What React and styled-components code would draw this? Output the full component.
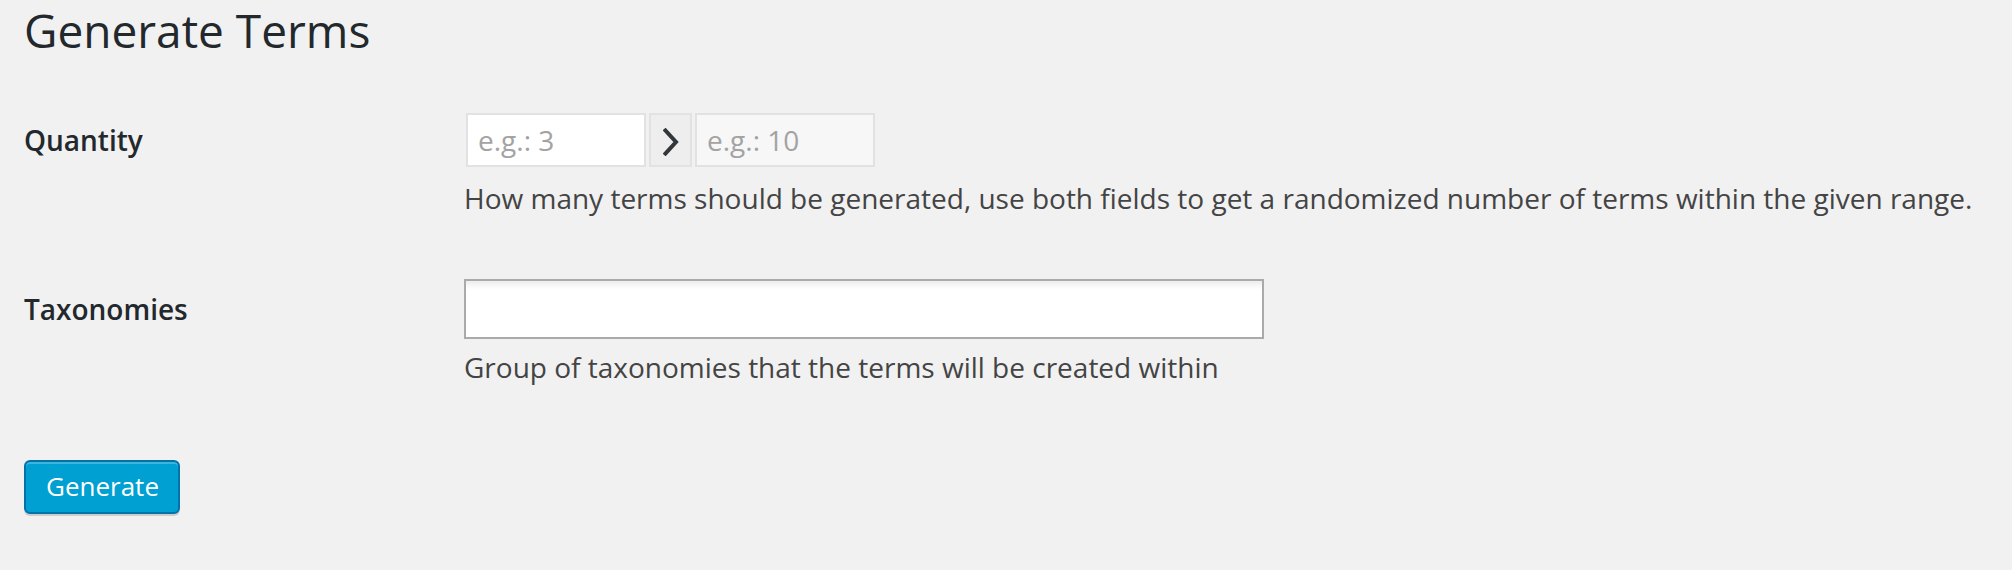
import React from "react";
import styled, { createGlobalStyle } from "styled-components";

const Global = createGlobalStyle`
  html, body { margin: 0; padding: 0; background: #f1f1f1; }
  body { font-family: "Open Sans", "Noto Sans", sans-serif; color: #23282d; }
  * { box-sizing: border-box; }
`;

const Page = styled.div`
  min-height: 570px;
  padding: 1px 0 0 24px;
  background: #f1f1f1;
`;

const Title = styled.h1`
  margin: 0;
  font-size: 46px;
  font-weight: 400;
  line-height: 58px;
  color: #23282d;
`;

const Field = styled.div`
  display: grid;
  grid-template-columns: 440px 1fr;
  align-items: center;
  margin-top: ${(p) => p.$top}px;
`;

const Label = styled.label`
  font-size: 28px;
  font-weight: 600;
  line-height: 40px;
  color: #23282d;
`;

const Controls = styled.div`
  display: flex;
  align-items: stretch;
  gap: 3px;
  height: ${(p) => p.$h}px;
`;

const Description = styled.p`
  grid-column: 2;
  margin: ${(p) => p.$gap}px 0 0;
  font-size: 28px;
  line-height: 39px;
  color: #444;
  white-space: nowrap;
`;

const NumberInput = styled.input`
  width: 180px;
  margin-left: ${(p) => (p.$first ? 2 : 0)}px;
  padding: 0 10px;
  border: 2px solid #e2e2e2;
  background: ${(p) => (p.$muted ? "#f7f7f7" : "#ffffff")};
  font-family: "Open Sans", "Noto Sans", sans-serif;
  font-size: 28px;
  color: #32373c;
  outline: none;
  &::placeholder { color: #a3a3a3; }
`;

const Separator = styled.div`
  width: 43px;
  display: flex;
  align-items: center;
  justify-content: center;
  border: 2px solid #e2e2e2;
  background: #eeeeee;
`;

const MultiSelect = styled.div`
  width: 800px;
  border: 2px solid #aaaaaa;
  background: linear-gradient(to bottom, #eeeeee 1%, #ffffff 15%);
`;

const PrimaryButton = styled.button`
  margin-top: 73px;
  height: 54px;
  padding: 0 19px 2px 20px;
  border: 2px solid #0073aa;
  border-radius: 6px;
  background: #00a0d2;
  box-shadow: inset 0 2px 0 rgba(120, 200, 230, 0.5), 0 2px 0 rgba(0, 0, 0, 0.15);
  color: #ffffff;
  font-family: "Open Sans", "Noto Sans", sans-serif;
  font-size: 26px;
  line-height: 48px;
  cursor: pointer;
`;

const Chevron = () => (
  <svg width="16" height="28" viewBox="0 0 16 28" style={{ marginTop: 3 }}>
    <path d="M2.5 2.5 L13 14 L2.5 25.5" fill="none" stroke="#32373c" strokeWidth="4" strokeLinecap="square" />
  </svg>
);

export default function App() {
  return (
    <>
      <Global />
      <Page>
        <Title>Generate Terms</Title>
        <Field $top={54}>
          <Label>Quantity</Label>
          <Controls $h={54}>
            <NumberInput $first placeholder="e.g.: 3" />
            <Separator>
              <Chevron />
            </Separator>
            <NumberInput $muted placeholder="e.g.: 10" />
          </Controls>
          <Description $gap={12}>
            How many terms should be generated, use both fields to get a randomized number of terms within the given range.
          </Description>
        </Field>
        <Field $top={61}>
          <Label>Taxonomies</Label>
          <Controls $h={60}>
            <MultiSelect />
          </Controls>
          <Description $gap={9}>Group of taxonomies that the terms will be created within</Description>
        </Field>
        <PrimaryButton>Generate</PrimaryButton>
      </Page>
    </>
  );
}
